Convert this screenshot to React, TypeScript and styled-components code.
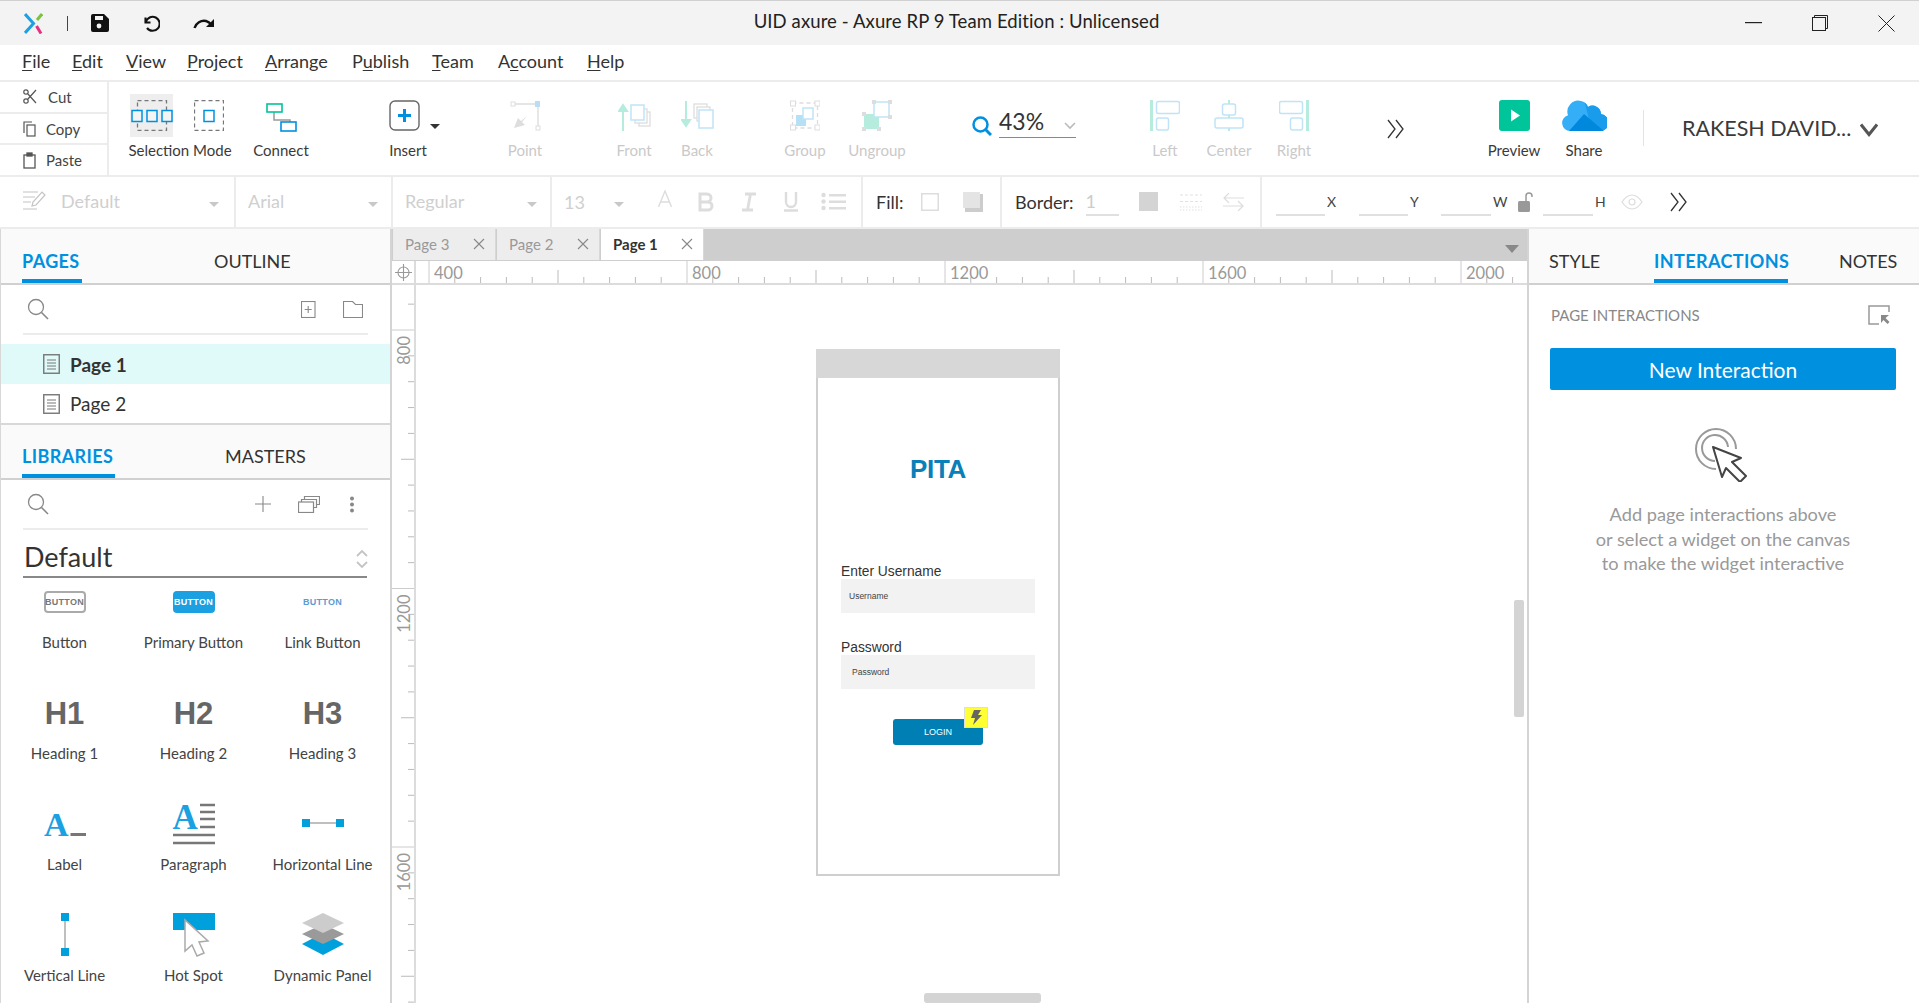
import React from "react";
import styled, { createGlobalStyle } from "styled-components";

const Global = createGlobalStyle`
  html, body { margin: 0; padding: 0; background: #fff; overflow: hidden; }
  #root { width: 1919px; height: 1003px; }
  * { box-sizing: border-box; }
`;

const BLUE = "#0090e0";
const font = `"Lato", "Noto Sans", sans-serif`;

const Shell = styled.div`
  width: 1919px; height: 1003px; display: flex; flex-direction: column; overflow: hidden;
  font-family: ${font}; color: #333; background: #fff;
`;

/* Title bar */
const TitleBar = styled.div`
  height: 45px; flex: none; background: #f3f3f3; border-top: 1px solid #d0d0d0;
  display: flex; align-items: center; position: relative; padding-left: 24px;
`;
const TitleText = styled.div`
  position: absolute; left: 0; right: 0; top: 9px; text-align: center; font-size: 18.5px; color: #222; letter-spacing: 0.1px;
  padding-right: 6px;
`;
const TitleDivider = styled.div`width: 1px; height: 15px; background: #444; margin: 0 23px 0 24px;`;
const QuickIcon = styled.span<{ $ml?: number }>`display: inline-flex; margin-left: ${p => p.$ml ?? 0}px;`;
const WindowControls = styled.div`
  margin-left: auto; display: flex; align-items: center; gap: 50px; padding-right: 24px;
`;

/* Menu */
const MenuBar = styled.div`
  height: 37px; flex: none; display: flex; align-items: center; padding: 0 0 3px 22px;
  border-bottom: 2px solid #ececec; font-size: 18px; color: #333;
`;
const MenuItem = styled.div<{ $w: number }>`width: ${p => p.$w}px; white-space: nowrap; u { text-underline-offset: 2px; text-decoration-thickness: 1px; }`;

/* Ribbon */
const Ribbon = styled.div`height: 95px; flex: none; display: flex; border-bottom: 2px solid #ececec;`;
const Clipboard = styled.div`width: 109px; flex: none; display: flex; flex-direction: column; border-right: 2px solid #ececec;`;
const ClipRow = styled.div<{ $last?: boolean; $pl?: number }>`
  flex: 1; display: flex; align-items: center; padding-left: 23px; gap: ${p => p.$pl ?? 9}px;
  font-size: 15px; color: #444; border-bottom: ${p => (p.$last ? "none" : "2px solid #ececec")};
`;
const Tool = styled.div<{ $w: number; $ml?: number; $off?: boolean }>`
  width: ${p => p.$w}px; margin-left: ${p => p.$ml ?? 0}px; flex: none; display: flex; flex-direction: column; align-items: center;
  padding-top: 18px; color: ${p => (p.$off ? "#c9c9c9" : "#3a3a3a")}; font-size: 15px; white-space: nowrap;
`;
const ToolIcon = styled.div`height: 31px; display: flex; align-items: flex-start; justify-content: center;`;
const ToolLabel = styled.div`margin-top: 9px; line-height: 20px;`;
const SelectPair = styled.div`display: flex; gap: 2px; position: relative;`;
const SelectMode = styled.div<{ $on?: boolean }>`
  width: 43px; height: 43px; margin-top: -6px; margin-bottom: -6px; display: flex; align-items: center; justify-content: center;
  background: ${p => (p.$on ? "#eeeeee" : "transparent")}; & + & { margin-left: 12px; width: 43px; }
`;
const ZoomBox = styled.div`
  width: 105px; margin-left: 53px; flex: none; padding-top: 28px; display: flex; align-items: flex-start; gap: 7px;
`;
const ZoomField = styled.div`
  width: 77px; height: 33px; border-bottom: 1px solid #888; font-size: 23px; line-height: 29px; color: #333;
  display: flex; justify-content: space-between; align-items: center; margin-top: -5px;
`;
const More = styled.div<{ $ml: number; $mt: number }>`margin-left: ${p => p.$ml}px; margin-top: ${p => p.$mt}px; flex: none;`;
const VLine = styled.div`width: 1px; height: 36px; background: #e2e2e2; margin: 28px 0 0 24px; flex: none;`;
const UserName = styled.div`
  margin-left: 38px; padding-top: 33px; display: flex; gap: 9px; font-size: 21.5px; color: #3a3a3a; white-space: nowrap; align-items: flex-start;
`;

/* Format bar */
const FormatBar = styled.div`height: 52px; flex: none; display: flex; border-bottom: 2px solid #ececec; align-items: stretch;`;
const FCell = styled.div<{ $w?: number; $pl?: number; $pr?: number; $pb?: number }>`
  width: ${p => (p.$w ? `${p.$w}px` : "auto")}; flex: ${p => (p.$w ? "none" : "1")}; display: flex; align-items: center;
  padding-left: ${p => p.$pl ?? 0}px; padding-right: ${p => p.$pr ?? 0}px; border-right: 2px solid #ececec;
  font-size: 18px; color: #cfcfcf; padding-bottom: ${p => p.$pb ?? 1}px; &:last-child { border-right: none; }
`;
const Caret = styled.span<{ $mt?: number }>`
  width: 0; height: 0; border-left: 5px solid transparent; border-right: 5px solid transparent; border-top: 5px solid #c8c8c8;
  margin-left: auto; margin-top: ${p => p.$mt ?? 7}px; flex: none;
`;
const FGap = styled.span<{ $ml: number }>`margin-left: ${p => p.$ml}px; display: inline-flex; align-items: center; white-space: nowrap;`;
const FLabel = styled.span<{ $ml?: number }>`margin-left: ${p => p.$ml ?? 0}px; color: #333; font-size: 18px; white-space: nowrap;`;
const FInput = styled.div<{ $w: number; $ml?: number }>`
  width: ${p => p.$w}px; margin-left: ${p => p.$ml ?? 0}px; height: 22px; margin-top: 6px; border-bottom: 2px solid #e0e0e0; flex: none;
  font-size: 18px; line-height: 14px; color: #ccc;
`;
const Coord = styled.span<{ $ml: number }>`margin-left: ${p => p.$ml}px; font-size: 14px; color: #444; flex: none; width: 14px;`;

/* Main */
const Main = styled.div`flex: 1; display: flex; min-height: 0;`;
const LeftPanel = styled.div`width: 392px; flex: none; display: flex; flex-direction: column; border-left: 1px solid #d8d8d8; border-right: 2px solid #d4d4d4; overflow: hidden;`;
const PanelTabs = styled.div<{ $h: number; $pl?: number; $top?: boolean }>`
  height: ${p => p.$h}px; flex: none; background: #fafafa; border-bottom: 2px solid #d0d0d0; display: flex; align-items: flex-end; padding-left: ${p => p.$pl ?? 21}px;
  border-top: ${p => (p.$top ? "2px solid #d8d8d8" : "none")};
`;
const PanelTab = styled.div<{ $on?: boolean; $w: number; $ml?: number }>`
  width: ${p => p.$w}px; margin-left: ${p => p.$ml ?? 0}px; height: 36px; font-size: 18px; line-height: 28px; white-space: nowrap;
  font-weight: ${p => (p.$on ? 700 : 400)}; letter-spacing: ${p => (p.$on ? "0.4px" : "0")}; color: ${p => (p.$on ? BLUE : "#333")}; border-bottom: 4px solid ${p => (p.$on ? BLUE : "transparent")};
`;
const SearchRow = styled.div<{ $h: number; $pr: number }>`
  height: ${p => p.$h}px; margin: 0 22px; flex: none; border-bottom: 2px solid #ececec; display: flex; align-items: center; padding: 0 ${p => p.$pr}px 0 4px;
`;
const Spacer = styled.div`flex: 1;`;
const RowIcon = styled.span<{ $ml?: number }>`display: inline-flex; margin-left: ${p => p.$ml ?? 0}px;`;
const PageList = styled.div`padding-top: 9px; flex: none;`;
const PageRow = styled.div<{ $on?: boolean; $h: number }>`
  height: ${p => p.$h}px; display: flex; align-items: center; padding-left: 42px; gap: 10px; font-size: 19px;
  background: ${p => (p.$on ? "#e0f9f9" : "transparent")}; font-weight: ${p => (p.$on ? 700 : 400)}; color: #333;
`;
const LibTitle = styled.div`
  margin: 0 23px 0 22px; height: 48px; flex: none; border-bottom: 2px solid #888; display: flex; align-items: center; justify-content: space-between;
  font-size: 27px; padding-left: 1px; color: #333; padding-top: 6px;
`;
const WidgetGrid = styled.div`display: grid; grid-template-columns: repeat(3, 129px); grid-auto-rows: 111px; margin-left: -1px;`;
const Widget = styled.div`display: flex; flex-direction: column; align-items: center; font-size: 15px; color: #444;`;
const WidgetIcon = styled.div`height: 44px; display: flex; align-items: center; justify-content: center; width: 100%;`;
const WidgetName = styled.div`line-height: 41px; white-space: nowrap;`;
const BtnThumb = styled.div<{ $kind: "plain" | "primary" | "link" }>`
  width: 42px; height: 22px; margin-top: 3px; border-radius: 4px; display: flex; align-items: center; justify-content: center;
  font-family: "Liberation Sans", sans-serif; font-weight: 700; font-size: 9px; letter-spacing: 0.3px;
  background: ${p => (p.$kind === "primary" ? "#1ba0e1" : "transparent")};
  color: ${p => (p.$kind === "primary" ? "#fff" : p.$kind === "link" ? "#5b9bd5" : "#777")};
  border: ${p => (p.$kind === "plain" ? "2px solid #aaa" : "none")};
`;
const HeadThumb = styled.div`font-family: "Liberation Sans", sans-serif; font-weight: 700; font-size: 31px; color: #666; line-height: 36px; margin-top: 5px;`;

/* Canvas */
const CanvasCol = styled.div`flex: 1; min-width: 0; display: flex; flex-direction: column;`;
const TabStrip = styled.div`height: 32px; flex: none; background: #cecece; display: flex; position: relative; padding-left: 1px;`;
const DocTab = styled.div<{ $on?: boolean }>`
  width: 103px; height: 31px; display: flex; align-items: center; justify-content: space-between; padding: 0 10px 2px 12px; font-size: 15px;
  margin-right: 1px; background: ${p => (p.$on ? "#fff" : "#ededed")}; color: ${p => (p.$on ? "#333" : "#999")}; font-weight: ${p => (p.$on ? 700 : 400)};
  border-right: 1px solid #d8d8d8;
`;
const StripArrow = styled.span`
  position: absolute; right: 8px; top: 16px; width: 0; height: 0;
  border-left: 7px solid transparent; border-right: 7px solid transparent; border-top: 8px solid #888;
`;
const RulerRow = styled.div`height: 24px; flex: none; display: flex; border-bottom: 2px solid #dcdcdc;`;
const RulerCorner = styled.div`width: 24px; flex: none; border-right: 2px solid #dcdcdc; display: flex; align-items: center; justify-content: center;`;
const Workspace = styled.div`flex: 1; display: flex; min-height: 0;`;
const VRuler = styled.div`width: 24px; flex: none; border-right: 2px solid #dcdcdc;`;
const Stage = styled.div`flex: 1; position: relative; overflow: hidden; background: #fff;`;
const ScrollV = styled.div`position: absolute; left: 1098px; top: 315px; width: 10px; height: 117px; background: #d4d4d4; border-radius: 2px;`;
const ScrollH = styled.div`position: absolute; left: 508px; top: 708px; width: 117px; height: 10px; background: #d4d4d4; border-radius: 3px;`;

/* Wireframe */
const Phone = styled.div`
  position: absolute; left: 400px; top: 64px; width: 244px; height: 527px; border: 2px solid #cfcfcf; border-top: none;
  display: flex; flex-direction: column; align-items: center; background: #fff; font-family: "Liberation Sans", Arial, sans-serif;
`;
const PhoneHead = styled.div`height: 29px; width: 244px; margin: 0 -2px; background: #d7d7d7; flex: none;`;
const Brand = styled.div`margin-top: 76px; font-size: 26px; font-weight: 700; color: #0a7fb8; line-height: 30px; letter-spacing: -0.3px;`;
const FieldLabel = styled.div<{ $mt: number }>`align-self: flex-start; margin: ${p => p.$mt}px 0 0 23px; font-size: 13.8px; line-height: 14px; color: #333;`;
const FieldBox = styled.div<{ $pl: number }>`
  width: 194px; height: 34px; background: #f2f2f2; align-self: flex-start; margin-left: 23px; flex: none; display: flex; align-items: center;
  padding-left: ${p => p.$pl}px; font-size: 8.5px; color: #444;
`;
const Login = styled.div`
  width: 90px; height: 26px; margin-top: 30px; background: #007fb5; border-radius: 3px; color: #fff; font-size: 9px; display: flex; align-items: center; justify-content: center; position: relative; flex: none;
`;
const Bolt = styled.div`
  position: absolute; right: -5px; top: -12px; width: 24px; height: 21px; background: #ffff33; border: 1px solid #ddd; display: flex; align-items: center; justify-content: center;
`;

/* Right panel */
const RightPanel = styled.div`width: 392px; flex: none; border-left: 2px solid #d4d4d4; display: flex; flex-direction: column;`;
const PanelBody = styled.div`padding: 0 23px 0 21px; display: flex; flex-direction: column;`;
const PanelHead = styled.div`
  height: 63px; display: flex; align-items: center; justify-content: space-between; font-size: 15px; color: #888; padding: 0 6px 4px 1px;
`;
const NewBtn = styled.div`
  height: 42px; background: ${BLUE}; border-radius: 2px; color: #fff; font-size: 21px; display: flex; align-items: center; justify-content: center;
`;
const HintIcon = styled.div`display: flex; justify-content: center; margin: 38px 0 0 0;`;
const Hint = styled.div`margin-top: 20px; text-align: center; font-size: 18.2px; line-height: 24.5px; color: #999; white-space: nowrap;`;

const Major = [429, 687, 945, 1203, 1461];
const HRulerSvg = () => {
  const ticks: React.ReactNode[] = [];
  const x0 = 416;
  for (let i = 0; i <= 43; i++) {
    const x = 429 + i * 25.8 - x0;
    if (x > 1109) break;
    const major = i % 10 === 0;
    const mid = i % 5 === 0 && !major;
    ticks.push(<line key={i} x1={x} x2={x} y1={major ? 0 : mid ? 9 : 16} y2={22} stroke={major ? "#ccc" : "#bbb"} strokeWidth={1} />);
  }
  return (
    <svg width={1109} height={22} style={{ display: "block" }} viewBox="0 0 1109 22">
      {ticks}
      {Major.map((m, i) => (
        <text key={m} x={m - x0 + 5} y={18} fontSize={16.5} fill="#999" fontFamily="Lato, sans-serif">{400 * (i + 1)}</text>
      ))}
    </svg>
  );
};
const VRulerSvg = () => {
  const ticks: React.ReactNode[] = [];
  for (let i = -1; i <= 26; i++) {
    const y = 45 + i * 25.85;
    const major = i % 10 === 0;
    const mid = Math.abs(i % 10) === 5;
    ticks.push(<line key={i} x1={major ? 0 : mid ? 9 : 16} x2={22} y1={y} y2={y} stroke={major ? "#ccc" : "#bbb"} />);
  }
  return (
    <svg width={22} height={718} style={{ display: "block" }}>
      {ticks}
      {[800, 1200, 1600].map((v, i) => {
        const y = 45 + i * 258.5 + 6;
        return <text key={v} transform={`translate(18 ${y}) rotate(-90)`} textAnchor="end" fontSize={16.5} fill="#999" fontFamily="Lato, sans-serif">{v}</text>;
      })}
    </svg>
  );
};

const Close = ({ c = "#888" }: { c?: string }) => (
  <svg width={12} height={12} viewBox="0 0 12 12"><path d="M1 1l10 10M11 1L1 11" stroke={c} strokeWidth={1.1} fill="none" /></svg>
);
const Search = () => (
  <svg width={22} height={22} viewBox="0 0 22 22" fill="none" stroke="#888"><circle cx={9} cy={9} r={7.5} strokeWidth={1.3} /><path d="M14.5 14.5L21 21" strokeWidth={1.6} /></svg>
);
const PageIcon = () => (
  <svg width={17} height={20} viewBox="0 0 17 20" fill="none" stroke="#777"><rect x={0.75} y={0.75} width={15.5} height={18.5} strokeWidth={1.4} /><path d="M4 6h9M4 9h9M4 12h9M4 15h9" strokeWidth={1} /></svg>
);
const Chevrons = () => (
  <svg width={12} height={20} viewBox="0 0 12 20" fill="none" stroke="#c4c4c4" strokeWidth={1.8} style={{ marginTop: 5, marginRight: -1 }}><path d="M1 7l5-5 5 5" /><path d="M1 13l5 5 5-5" /></svg>
);
const DoubleChevron = () => (
  <svg width={18} height={20} viewBox="0 0 18 20" fill="none" stroke="#333" strokeWidth={1.3}><path d="M1 1l7 9-7 9" /><path d="M9 1l7 9-7 9" /></svg>
);

const names: [string, React.ReactNode][] = [
  ["Button", <BtnThumb $kind="plain">BUTTON</BtnThumb>],
  ["Primary Button", <BtnThumb $kind="primary">BUTTON</BtnThumb>],
  ["Link Button", <BtnThumb $kind="link">BUTTON</BtnThumb>],
  ["Heading 1", <HeadThumb>H1</HeadThumb>],
  ["Heading 2", <HeadThumb>H2</HeadThumb>],
  ["Heading 3", <HeadThumb>H3</HeadThumb>],
  ["Label", (
    <svg width={44} height={44} viewBox="0 0 44 44" style={{ marginTop: 3 }}>
      <text x={1} y={34} fontFamily="Liberation Serif, serif" fontWeight={700} fontSize={34} fill="#1ba0e1">A</text>
      <rect x={27.5} y={31} width={15.5} height={3} fill="#777" />
    </svg>
  )],
  ["Paragraph", (
    <svg width={44} height={50} viewBox="0 0 44 50" style={{ marginTop: -4 }}>
      <text x={0.5} y={34} fontFamily="Liberation Serif, serif" fontWeight={700} fontSize={35} fill="#1ba0e1">A</text>
      <path d="M28 10h15M28 17h15M28 24h15M28 32h15M1 40h42M1 48h42" stroke="#777" strokeWidth={2.5} />
    </svg>
  )],
  ["Horizontal Line", (
    <svg width={44} height={10} viewBox="0 0 44 10" style={{ marginTop: 2 }}>
      <path d="M4 5h36" stroke="#aaa" strokeWidth={1.5} /><rect x={1} y={1} width={8} height={8} fill="#00a0dc" /><rect x={35} y={1} width={8} height={8} fill="#00a0dc" />
    </svg>
  )],
  ["Vertical Line", (
    <svg width={10} height={43} viewBox="0 0 10 43" style={{ marginTop: 2 }}>
      <path d="M5 4v36" stroke="#aaa" strokeWidth={1.5} /><rect x={1} y={0} width={8} height={8} fill="#00a0dc" /><rect x={1} y={35} width={8} height={8} fill="#00a0dc" />
    </svg>
  )],
  ["Hot Spot", (
    <svg width={44} height={44} viewBox="0 0 44 44" style={{ marginTop: 3 }}>
      <rect x={1} y={0} width={42} height={17} fill="#00a0dc" />
      <path d="M13 7v31l7-6 5 11 7-3-5-11 9-1z" fill="#fff" stroke="#aaa" strokeWidth={1.5} />
    </svg>
  )],
  ["Dynamic Panel", (
    <svg width={44} height={44} viewBox="0 0 44 44" style={{ marginTop: 3 }}>
      <path d="M1 31l21-11 21 11-21 11z" fill="#00a0dc" />
      <path d="M1 21l21-10 21 10-21 10z" fill="#9a9a9a" />
      <path d="M1 10L22 0l21 10-21 10z" fill="#cccccc" />
    </svg>
  )],
];

const App: React.FC = () => (
  <Shell>
    <Global />
    <TitleBar>
      <svg width={19} height={21} viewBox="0 0 19 21" fill="none" strokeWidth={3}>
        <path d="M1 1l8.5 9.5L1 20" stroke="#1ba0e1" />
        <path d="M18 1l-5 6" stroke="#7cc242" />
        <path d="M12.5 13l4.5 7.5" stroke="#e6317f" />
      </svg>
      <TitleDivider />
      <QuickIcon>
        <svg width={18} height={18} viewBox="0 0 18 18"><path d="M2 0h11l5 5v11a2 2 0 01-2 2H2a2 2 0 01-2-2V2a2 2 0 012-2z" fill="#111" /><rect x={4} y={2} width={8} height={4} fill="#f3f3f3" /><circle cx={8} cy={12} r={2.4} fill="#f3f3f3" /></svg>
      </QuickIcon>
      <QuickIcon $ml={33}>
        <svg width={18} height={18} viewBox="0 0 18 18" fill="none" stroke="#111" strokeWidth={2.1}><path d="M3.5 3.5v5h5" /><path d="M3.8 8.2A7 7 0 1 1 5 14" /></svg>
      </QuickIcon>
      <QuickIcon $ml={33}>
        <svg width={22} height={14} viewBox="0 0 22 14" fill="none" stroke="#111" strokeWidth={2.4}><path d="M1.5 12C3 7 8 4 13 5c2 .5 4 2 6 4" /><path d="M21 3v8h-8z" fill="#111" stroke="none" /></svg>
      </QuickIcon>
      <TitleText>UID axure - Axure RP 9 Team Edition : Unlicensed</TitleText>
      <WindowControls>
        <svg width={17} height={2}><rect width={17} height={1.2} fill="#222" /></svg>
        <svg width={16} height={16} viewBox="0 0 16 16" fill="none" stroke="#222"><rect x={0.5} y={2.5} width={13} height={13} /><path d="M2.5 2.5v-2h13v13h-2" /></svg>
        <svg width={17} height={17} viewBox="0 0 17 17" fill="none" stroke="#222"><path d="M0.5 0.5l16 16M16.5 0.5l-16 16" /></svg>
      </WindowControls>
    </TitleBar>

    <MenuBar>
      <MenuItem $w={50}><u>F</u>ile</MenuItem>
      <MenuItem $w={54}><u>E</u>dit</MenuItem>
      <MenuItem $w={61}><u>V</u>iew</MenuItem>
      <MenuItem $w={78}><u>P</u>roject</MenuItem>
      <MenuItem $w={87}><u>A</u>rrange</MenuItem>
      <MenuItem $w={80}>P<u>u</u>blish</MenuItem>
      <MenuItem $w={66}><u>T</u>eam</MenuItem>
      <MenuItem $w={89}>A<u>c</u>count</MenuItem>
      <MenuItem $w={50}><u>H</u>elp</MenuItem>
    </MenuBar>

    <Ribbon>
      <Clipboard>
        <ClipRow $pl={11}>
          <svg width={14} height={15} viewBox="0 0 14 15" fill="none" stroke="#555" strokeWidth={1.2}><circle cx={3} cy={12} r={2.2} /><circle cx={3} cy={3} r={2.2} /><path d="M4.5 10.5L13 1M4.5 4.5L13 14" /></svg>
          Cut
        </ClipRow>
        <ClipRow $pl={10}>
          <svg width={13} height={16} viewBox="0 0 13 16" fill="none" stroke="#555" strokeWidth={1.2}><path d="M1 12V1h8" /><rect x={4} y={4} width={8} height={11} /></svg>
          Copy
        </ClipRow>
        <ClipRow $last $pl={10}>
          <svg width={13} height={17} viewBox="0 0 13 17" fill="none" stroke="#555" strokeWidth={1.3}><rect x={1} y={3} width={11} height={13} /><rect x={4} y={1} width={5} height={3} fill="#555" /></svg>
          Paste
        </ClipRow>
      </Clipboard>

      <Tool $w={104} $ml={19}>
        <ToolIcon>
          <SelectPair>
            <SelectMode $on>
              <svg width={42} height={31} viewBox="0 0 42 31" fill="none">
                <rect x={6.5} y={0.5} width={29} height={30} stroke="#777" strokeDasharray="4 3" strokeWidth={1.3} />
                <g stroke="#0090e0" strokeWidth={1.5} fill="#f4f4f4"><rect x={1} y={10.5} width={10} height={11} /><rect x={16} y={10.5} width={10} height={11} /><rect x={31} y={10.5} width={10} height={11} /></g>
              </svg>
            </SelectMode>
            <SelectMode>
              <svg width={30} height={31} viewBox="0 0 30 31" fill="none">
                <rect x={0.5} y={0.5} width={29} height={30} stroke="#777" strokeDasharray="4 3" strokeWidth={1.3} />
                <rect x={10} y={10.5} width={10} height={11} stroke="#0090e0" strokeWidth={1.5} />
              </svg>
            </SelectMode>
          </SelectPair>
        </ToolIcon>
        <ToolLabel>Selection Mode</ToolLabel>
      </Tool>
      <Tool $w={98}>
        <ToolIcon>
          <svg width={31} height={29} viewBox="0 0 31 29" fill="none" style={{ marginTop: 3 }}>
            <path d="M8 9v8h16v4" stroke="#999" strokeWidth={1.5} />
            <rect x={1} y={1} width={15} height={8} stroke="#00c49a" strokeWidth={1.6} fill="#fff" />
            <rect x={15} y={19} width={15} height={9} stroke="#0090e0" strokeWidth={1.6} fill="#fff" />
          </svg>
        </ToolIcon>
        <ToolLabel>Connect</ToolLabel>
      </Tool>
      <Tool $w={156}>
        <ToolIcon>
          <svg width={52} height={31} viewBox="0 0 52 31" fill="none" style={{ marginLeft: 14 }}>
            <rect x={1} y={1} width={29} height={29} rx={5} stroke="#666" strokeWidth={1.4} />
            <path d="M15.5 9v13M9 15.5h13" stroke="#0090e0" strokeWidth={3} />
            <path d="M41 24h10l-5 5z" fill="#333" />
          </svg>
        </ToolIcon>
        <ToolLabel>Insert</ToolLabel>
      </Tool>
      <Tool $w={78} $off>
        <ToolIcon>
          <svg width={31} height={31} viewBox="0 0 31 31" fill="none">
            <path d="M5 4h21M28 7v19" stroke="#ddd" strokeWidth={1.4} />
            <rect x={1} y={2} width={4} height={4} stroke="#ddd" /><rect x={25} y={1} width={5} height={6} fill="#b8def7" /><rect x={26} y={26} width={4} height={4} stroke="#ddd" />
            <path d="M4 28l4-10 3 3 6-5-5 6 3 3z" fill="#ddd" />
          </svg>
        </ToolIcon>
        <ToolLabel>Point</ToolLabel>
      </Tool>
      <Tool $w={60} $ml={40} $off>
        <ToolIcon>
          <svg width={33} height={29} viewBox="0 0 33 29" fill="none" style={{ marginTop: 2 }}>
            <path d="M5 29V5M1 9l4-6 4 6z" stroke="#b5ecdd" strokeWidth={2} fill="#b5ecdd" />
            <rect x={21} y={10} width={11} height={14} stroke="#ddd" strokeWidth={1.3} /><rect x={17} y={7} width={12} height={14} stroke="#ddd" strokeWidth={1.3} fill="#fff" />
            <rect x={13} y={3} width={13} height={15} stroke="#c0e3f8" strokeWidth={1.5} fill="#fff" />
          </svg>
        </ToolIcon>
        <ToolLabel>Front</ToolLabel>
      </Tool>
      <Tool $w={66} $off>
        <ToolIcon>
          <svg width={33} height={29} viewBox="0 0 33 29" fill="none" style={{ marginTop: 1 }}>
            <path d="M5 0v24M1 19l4 6 4-6z" stroke="#b5ecdd" strokeWidth={2} fill="#b5ecdd" />
            <rect x={13} y={3} width={13} height={14} stroke="#ddd" strokeWidth={1.3} /><rect x={16} y={6} width={13} height={14} stroke="#ddd" strokeWidth={1.3} fill="#fff" />
            <rect x={18} y={9} width={14} height={18} stroke="#c0e3f8" strokeWidth={1.5} fill="#fff" />
          </svg>
        </ToolIcon>
        <ToolLabel>Back</ToolLabel>
      </Tool>
      <Tool $w={60} $ml={45} $off>
        <ToolIcon>
          <svg width={30} height={31} viewBox="0 0 30 31" fill="none">
            <rect x={2.5} y={3} width={25} height={25} stroke="#ddd" strokeWidth={1.3} strokeDasharray="4 3" />
            <rect x={0.5} y={1} width={5} height={5} stroke="#ddd" fill="#fff" /><rect x={25} y={1} width={5} height={5} stroke="#ddd" fill="#fff" /><rect x={0.5} y={25} width={5} height={5} stroke="#ddd" fill="#fff" /><rect x={25} y={25} width={5} height={5} stroke="#ddd" fill="#fff" />
            <rect x={6} y={15} width={10} height={11} fill="#b5e0f5" /><rect x={13} y={8} width={10} height={11} stroke="#c0e3f8" strokeWidth={1.5} fill="#fff" />
          </svg>
        </ToolIcon>
        <ToolLabel>Group</ToolLabel>
      </Tool>
      <Tool $w={84} $off>
        <ToolIcon>
          <svg width={30} height={31} viewBox="0 0 30 31" fill="none">
            <rect x={2} y={14} width={15} height={15} fill="#b5ecdd" />
            <rect x={12} y={2} width={15} height={15} stroke="#c0e3f8" strokeWidth={1.5} fill="#fff" />
            <g fill="#ddd"><rect x={0} y={12} width={4} height={4} /><rect x={15} y={27} width={4} height={4} /><rect x={0} y={27} width={4} height={4} /><rect x={10} y={0} width={4} height={4} /><rect x={26} y={0} width={4} height={4} /><rect x={26} y={15} width={4} height={4} /></g>
          </svg>
        </ToolIcon>
        <ToolLabel>Ungroup</ToolLabel>
      </Tool>
      <ZoomBox>
        <svg width={20} height={20} viewBox="0 0 20 20" fill="none" stroke="#0090e0" style={{ marginTop: 6 }}><circle cx={8.5} cy={8.5} r={7} strokeWidth={2.5} /><path d="M13.5 13.5L19 19" strokeWidth={3} /></svg>
        <ZoomField>
          43%
          <svg width={12} height={8} viewBox="0 0 12 8" fill="none" stroke="#bbb" strokeWidth={1.6} style={{ marginTop: 9 }}><path d="M1 1l5 5 5-5" /></svg>
        </ZoomField>
      </ZoomBox>
      <Tool $w={60} $ml={58} $off>
        <ToolIcon>
          <svg width={30} height={31} viewBox="0 0 30 31" fill="none"><rect x={0} y={0} width={3} height={31} fill="#b5ecdd" /><rect x={6.5} y={1.5} width={23} height={12} rx={2} stroke="#c0e3f8" strokeWidth={1.5} /><rect x={6.5} y={18} width={12} height={12} rx={2} stroke="#c0e3f8" strokeWidth={1.5} /></svg>
        </ToolIcon>
        <ToolLabel>Left</ToolLabel>
      </Tool>
      <Tool $w={68} $off>
        <ToolIcon>
          <svg width={30} height={31} viewBox="0 0 30 31" fill="none"><rect x={14} y={0} width={2} height={31} fill="#b5ecdd" /><rect x={8.5} y={4} width={13} height={11} rx={2} stroke="#c0e3f8" strokeWidth={1.5} fill="#fff" /><rect x={1} y={18} width={28} height={10} rx={2} stroke="#c0e3f8" strokeWidth={1.5} fill="#fff" /></svg>
        </ToolIcon>
        <ToolLabel>Center</ToolLabel>
      </Tool>
      <Tool $w={62} $off>
        <ToolIcon>
          <svg width={30} height={31} viewBox="0 0 30 31" fill="none"><rect x={27} y={0} width={3} height={31} fill="#b5ecdd" /><rect x={0.5} y={1.5} width={23} height={12} rx={2} stroke="#c0e3f8" strokeWidth={1.5} /><rect x={11.5} y={18} width={12} height={12} rx={2} stroke="#c0e3f8" strokeWidth={1.5} /></svg>
        </ToolIcon>
        <ToolLabel>Right</ToolLabel>
      </Tool>
      <More $ml={62} $mt={37}><DoubleChevron /></More>
      <Tool $w={70} $ml={74}>
        <ToolIcon>
          <svg width={31} height={31} viewBox="0 0 31 31"><rect width={31} height={31} rx={3} fill="#00c49a" /><path d="M12 9.5v12l9-6z" fill="#fff" /></svg>
        </ToolIcon>
        <ToolLabel>Preview</ToolLabel>
      </Tool>
      <Tool $w={70}>
        <ToolIcon>
          <svg width={45} height={31} viewBox="0 0 45 31">
            <defs><clipPath id="cloud"><path d="M8 31a8 8 0 01-2-15.700A11 11 0 0119 1a10 10 0 017 6 8.500 8.500 0 0113 7 8.500 8.500 0 01-2 17z" /></clipPath></defs>
            <g clipPath="url(#cloud)">
              <rect width={45} height={31} fill="#35aef8" />
              <path d="M22 0L45 0V31H30z" fill="#1a9cec" />
              <path d="M7 31L22 14 42 31z" fill="#0088dd" />
            </g>
          </svg>
        </ToolIcon>
        <ToolLabel>Share</ToolLabel>
      </Tool>
      <VLine />
      <UserName>
        RAKESH DAVID...
        <svg width={18} height={14} viewBox="0 0 18 14" fill="none" stroke="#555" strokeWidth={3} style={{ marginTop: 8 }}><path d="M1 1.500l8 10 8-10" /></svg>
      </UserName>
    </Ribbon>

    <FormatBar>
      <FCell $w={236} $pl={23} $pr={15} $pb={3}>
        <svg width={23} height={21} viewBox="0 0 23 21" fill="none" stroke="#c4c4c4" strokeWidth={1.2}><path d="M0 2h15M0 7h12M0 12h8M0 19h14" /><path d="M9 16l1-4L19 2l3 3-9 10z" /></svg>
        <FGap $ml={15}>Default</FGap>
        <Caret />
      </FCell>
      <FCell $w={157} $pl={12} $pr={13} $pb={3}>Arial<Caret /></FCell>
      <FCell $w={159} $pl={12} $pr={13} $pb={3}>Regular<Caret /></FCell>
      <FCell $w={311} $pl={12}>
        13
        <FGap $ml={29}><Caret $mt={5} /></FGap>
        <FGap $ml={34}>
          <svg width={14} height={20} viewBox="0 0 14 20" style={{ marginTop: -3 }}><path d="M0.500 17L7 1l6.500 16M3 12h8" stroke="#ddd" strokeWidth={1.4} fill="none" /></svg>
        </FGap>
        <FGap $ml={26}>
          <svg width={16} height={20} viewBox="0 0 16 20"><path d="M2 2h7a4 4 0 010 8H2zM2 10h8a4 4 0 010 8H2z" fill="none" stroke="#ddd" strokeWidth={3} /></svg>
        </FGap>
        <FGap $ml={28}>
          <svg width={14} height={20} viewBox="0 0 14 20"><path d="M3 2h11M0 18h11M8.500 2L5.500 18" fill="none" stroke="#ddd" strokeWidth={2.8} /></svg>
        </FGap>
        <FGap $ml={28}>
          <svg width={14} height={21} viewBox="0 0 14 21"><path d="M2 1v10a5 5 0 0010 0V1M0 19.500h14" fill="none" stroke="#ddd" strokeWidth={2.4} /></svg>
        </FGap>
        <FGap $ml={23}>
          <svg width={25} height={19} viewBox="0 0 25 19"><g fill="#ddd"><circle cx={2.5} cy={3} r={2.2} /><circle cx={2.5} cy={9.500} r={2.2} /><circle cx={2.5} cy={16} r={2.2} /><rect x={8} y={2} width={17} height={2.500} /><rect x={8} y={8.500} width={17} height={2.500} /><rect x={8} y={15} width={17} height={2.500} /></g></svg>
        </FGap>
      </FCell>
      <FCell $w={139} $pl={13}>
        <FLabel>Fill:</FLabel>
        <FGap $ml={18}><svg width={18} height={18}><rect x={0.75} y={0.75} width={16.5} height={16.5} fill="none" stroke="#ddd" strokeWidth={1.5} /></svg></FGap>
        <FGap $ml={24}><svg width={20} height={20}><rect x={2} y={2} width={18} height={18} fill="#ccc" /><rect x={0} y={0} width={17} height={16} fill="#e4e4e4" /></svg></FGap>
      </FCell>
      <FCell $w={260} $pl={13}>
        <FLabel>Border:</FLabel>
        <FInput $w={33} $ml={12}>1</FInput>
        <FGap $ml={20}><svg width={19} height={19}><rect width={19} height={19} fill="#d4d4d4" /></svg></FGap>
        <FGap $ml={22}><svg width={22} height={18} viewBox="0 0 22 18" stroke="#e2e2e2" strokeWidth={1.2}><path d="M0 2h22M0 8.500h22" strokeDasharray="3 2" /><path d="M0 14h22M0 17h22" strokeDasharray="1.500 1.500" /></svg></FGap>
        <FGap $ml={21}><svg width={21} height={18} viewBox="0 0 21 18" fill="none" stroke="#ddd" strokeWidth={1.2}><path d="M21 5H1M6 0L1 5l5 5M0 13h20M15 8l5 5-5 5" /></svg></FGap>
      </FCell>
      <FCell $pl={14}>
        <FInput $w={49} />
        <Coord $ml={2}>X</Coord>
        <FInput $w={49} $ml={18} />
        <Coord $ml={2}>Y</Coord>
        <FInput $w={50} $ml={17} />
        <Coord $ml={2}>W</Coord>
        <FGap $ml={11}>
          <svg width={15} height={20} viewBox="0 0 15 20"><rect x={0} y={9} width={12} height={11} rx={1.5} fill="#999" /><path d="M8 9V4a3 3 0 016 0v1" fill="none" stroke="#999" strokeWidth={1.500} /></svg>
        </FGap>
        <FInput $w={50} $ml={10} />
        <Coord $ml={2}>H</Coord>
        <FGap $ml={12}>
          <svg width={22} height={16} viewBox="0 0 22 16" fill="none" stroke="#ddd" strokeWidth={1.2}><path d="M1 8c3-4.500 6.500-7 10-7s7 2.500 10 7c-3 4.500-6.500 7-10 7S4 12.500 1 8z" /><circle cx={11} cy={8} r={3} /></svg>
        </FGap>
        <FGap $ml={27}><DoubleChevron /></FGap>
      </FCell>
    </FormatBar>

    <Main>
      <LeftPanel>
        <PanelTabs $h={56}>
          <PanelTab $on $w={60}>PAGES</PanelTab>
          <PanelTab $w={90} $ml={132}>OUTLINE</PanelTab>
        </PanelTabs>
        <SearchRow $h={50} $pr={5}>
          <Search />
          <Spacer />
          <RowIcon>
            <svg width={15} height={17} viewBox="0 0 15 17" fill="none" stroke="#888" strokeWidth={1.1}><rect x={0.5} y={0.5} width={13.500} height={16} /><path d="M7.200 5v7M3.700 8.500h7" /></svg>
          </RowIcon>
          <RowIcon $ml={27}>
            <svg width={20} height={17} viewBox="0 0 20 17" fill="none" stroke="#888" strokeWidth={1.1}><path d="M0.500 16.500V0.500h9l3 3h7v13z" /></svg>
          </RowIcon>
        </SearchRow>
        <PageList>
          <PageRow $on $h={40}><PageIcon />Page 1</PageRow>
          <PageRow $h={39}><PageIcon />Page 2</PageRow>
        </PageList>
        <PanelTabs $h={57} $top>
          <PanelTab $on $w={93}>LIBRARIES</PanelTab>
          <PanelTab $w={90} $ml={110}>MASTERS</PanelTab>
        </PanelTabs>
        <SearchRow $h={50} $pr={13}>
          <Search />
          <Spacer />
          <RowIcon>
            <svg width={16} height={16} viewBox="0 0 16 16" stroke="#888" strokeWidth={1.1}><path d="M8 0v16M0 8h16" /></svg>
          </RowIcon>
          <RowIcon $ml={27}>
            <svg width={22} height={17} viewBox="0 0 22 17" fill="none" stroke="#888" strokeWidth={1.2}><rect x={0.5} y={6} width={15} height={10.500} /><path d="M3.500 6V3.500h15v8h-3M6.500 3.500V0.500h15v8h-3" /></svg>
          </RowIcon>
          <RowIcon $ml={29}>
            <svg width={6} height={17} viewBox="0 0 6 17" fill="#888"><circle cx={3} cy={2.500} r={2} /><circle cx={3} cy={8.500} r={2} /><circle cx={3} cy={14.500} r={2} /></svg>
          </RowIcon>
        </SearchRow>
        <LibTitle>Default<Chevrons /></LibTitle>
        <WidgetGrid>
          {names.map(([n, icon]) => (
            <Widget key={n}><WidgetIcon>{icon}</WidgetIcon><WidgetName>{n}</WidgetName></Widget>
          ))}
        </WidgetGrid>
      </LeftPanel>

      <CanvasCol>
        <TabStrip>
          <DocTab>Page 3<Close /></DocTab>
          <DocTab>Page 2<Close /></DocTab>
          <DocTab $on>Page 1<Close /></DocTab>
          <StripArrow />
        </TabStrip>
        <RulerRow>
          <RulerCorner>
            <svg width={17} height={17} viewBox="0 0 17 17" fill="none" stroke="#999" strokeWidth={1.1}><circle cx={8.500} cy={8.500} r={5.500} /><path d="M8.500 0v17M0 8.500h17" /></svg>
          </RulerCorner>
          <HRulerSvg />
        </RulerRow>
        <Workspace>
          <VRuler><VRulerSvg /></VRuler>
          <Stage>
            <Phone>
              <PhoneHead />
              <Brand>PITA</Brand>
              <FieldLabel $mt={81}>Enter Username</FieldLabel>
              <FieldBox $pl={8}>Username</FieldBox>
              <FieldLabel $mt={28}>Password</FieldLabel>
              <FieldBox $pl={11}>Password</FieldBox>
              <Login>
                LOGIN
                <Bolt>
                  <svg width={12} height={15} viewBox="0 0 12 15"><path d="M4 0h7L8 5h4L3 15l2-7H1z" fill="#666" /></svg>
                </Bolt>
              </Login>
            </Phone>
            <ScrollV />
            <ScrollH />
          </Stage>
        </Workspace>
      </CanvasCol>

      <RightPanel>
        <PanelTabs $h={56} $pl={20}>
          <PanelTab $w={53}>STYLE</PanelTab>
          <PanelTab $on $w={134} $ml={52}>INTERACTIONS</PanelTab>
          <PanelTab $w={60} $ml={51}>NOTES</PanelTab>
        </PanelTabs>
        <PanelBody>
          <PanelHead>
            PAGE INTERACTIONS
            <svg width={22} height={20} viewBox="0 0 22 20" fill="none"><path d="M21 7V1H1v18h10" stroke="#999" strokeWidth={1.5} /><path d="M21 10h-8v8l2.500-3 4 4 2-2-4-4z" fill="#888" /></svg>
          </PanelHead>
          <NewBtn>New Interaction</NewBtn>
          <HintIcon>
            <svg width={56} height={54} viewBox="0 0 56 54" fill="none">
              <path d="M21 41A20 20 0 1 1 41 21" stroke="#999" strokeWidth={2} />
              <path d="M20 33A13 13 0 1 1 33 19" stroke="#999" strokeWidth={2} />
              <path d="M18 19l28 11-9 4 14 14-6 6-14-14-4 9z" fill="#fff" stroke="#444" strokeWidth={2} strokeLinejoin="round" />
            </svg>
          </HintIcon>
          <Hint>Add page interactions above<br />or select a widget on the canvas<br />to make the widget interactive</Hint>
        </PanelBody>
      </RightPanel>
    </Main>
  </Shell>
);

export default App;
